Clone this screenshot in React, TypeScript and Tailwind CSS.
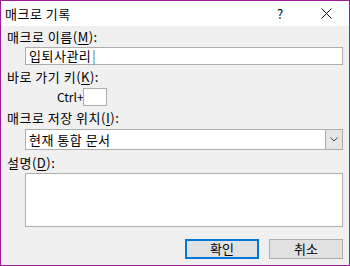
import React from 'react';

const font = { fontFamily: '"Noto Sans CJK KR", "Noto Sans", sans-serif' };

function Label({ pre, k, className = '' }: { pre: string; k: string; className?: string }) {
  return (
    <div className={`h-[16px] text-[13px] leading-[16px] tracking-[0.5px] text-black ${className}`}>
      {pre}(<span className="underline underline-offset-[2px]">{k}</span>):
    </div>
  );
}

export default function App() {
  return (
    <div
      className="w-[350px] h-[266px] border border-[#9c1c9e] flex flex-col bg-[#f0f0f0] overflow-hidden"
      style={font}
    >
      {/* Title bar */}
      <div className="h-[25px] bg-white flex items-center shrink-0">
        <span className="pl-[4px] text-[13px] leading-[16px] tracking-[0.5px] text-black">매크로 기록</span>
        <div className="ml-auto flex items-center">
          <span className="w-[46px] text-center text-[13px] leading-[16px] text-black">?</span>
          <div className="w-[46px] h-[25px] flex items-center justify-center">
            <svg width="11" height="11" viewBox="0 0 11 11">
              <path d="M0.5 0.5 L10.5 10.5 M10.5 0.5 L0.5 10.5" stroke="#111" strokeWidth="1" fill="none" />
            </svg>
          </div>
        </div>
      </div>

      {/* Body */}
      <div className="flex-1 flex flex-col pl-[6px] pr-[6px]">
        <Label pre="매크로 이름" k="M" className="mt-[3px]" />
        <div className="ml-[18px] mt-[2px] h-[18px] bg-white border border-[#adadad] flex items-center pl-[3px] text-[13px] leading-[16px] tracking-[0.5px] text-black">
          입퇴사관리<span className="ml-[1px] font-light">|</span>
        </div>

        <Label pre="바로 가기 키" k="K" className="mt-[4px]" />
        <div className="mt-[3px] flex items-center">
          <span className="ml-[50px] w-[26px] text-[12px] leading-[16px] text-black">Ctrl+</span>
          <div className="w-[24px] h-[18px] bg-white border border-[#adadad]" />
        </div>

        <Label pre="매크로 저장 위치" k="I" className="mt-[4px]" />
        <div className="ml-[18px] mt-[3px] h-[21px] bg-white border border-[#adadad] flex items-center">
          <span className="pl-[3px] text-[13px] leading-[16px] tracking-[0.5px] text-black">현재 통합 문서</span>
          <div className="ml-auto w-[17px] h-full bg-[#e5e5e5] border-l border-[#adadad] flex items-center justify-center">
            <svg width="8" height="5" viewBox="0 0 8 5">
              <path d="M0.5 0.5 L4 4 L7.5 0.5" stroke="#444" strokeWidth="1" fill="none" />
            </svg>
          </div>
        </div>

        <Label pre="설명" k="D" className="mt-[5px]" />
        <div className="ml-[18px] mt-[2px] h-[54px] bg-white border border-[#adadad]" />

        <div className="mt-[12px] flex justify-end gap-[10px]">
          <button className="w-[74px] h-[20px] bg-[#e1e1e1] border-2 border-[#0078d7] text-[13px] leading-[16px] text-black">
            확인
          </button>
          <button className="w-[74px] h-[20px] bg-[#e1e1e1] border border-[#adadad] text-[13px] leading-[16px] text-black">
            취소
          </button>
        </div>
      </div>
    </div>
  );
}
